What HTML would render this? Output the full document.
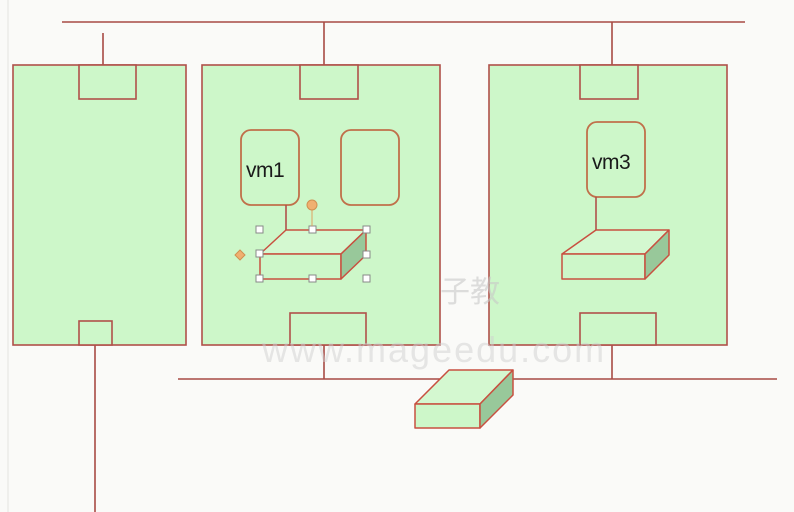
<!DOCTYPE html>
<html><head><meta charset="utf-8"><style>html,body{margin:0;padding:0;background:#fafaf8;width:794px;height:512px;overflow:hidden}</style></head>
<body>
<svg width="794" height="512" viewBox="0 0 794 512" xmlns="http://www.w3.org/2000/svg" font-family="Liberation Sans, sans-serif">
<rect width="794" height="512" fill="#fafaf8"/>
<line x1="8" y1="0" x2="8" y2="512" stroke="#e4e4e0" stroke-width="1"/>
<g stroke="#a84a44" stroke-width="1.6" fill="none">
<line x1="62" y1="22" x2="745" y2="22"/>
<line x1="103" y1="33" x2="103" y2="65"/>
<line x1="324" y1="22" x2="324" y2="65"/>
<line x1="612" y1="22" x2="612" y2="65"/>
<line x1="95" y1="345" x2="95" y2="512"/>
<line x1="178" y1="379" x2="777" y2="379"/>
<line x1="324" y1="345" x2="324" y2="379"/>
<line x1="612" y1="345" x2="612" y2="379"/>
</g>
<g stroke="#b0504a" stroke-width="1.6" fill="#cdf7c9">
<rect x="13" y="65" width="173" height="280"/>
<rect x="202" y="65" width="238" height="280"/>
<rect x="489" y="65" width="238" height="280"/>
<rect x="79" y="65" width="57" height="34"/>
<rect x="79" y="321" width="33" height="24"/>
<rect x="300" y="65" width="58" height="34"/>
<rect x="290" y="313" width="76" height="32"/>
<rect x="580" y="65" width="58" height="34"/>
<rect x="580" y="313" width="76" height="32"/>
</g>
<g stroke="#c0704a" stroke-width="1.8" fill="#cdf7c9">
<rect x="241" y="130" width="58" height="75" rx="10"/>
<rect x="341" y="130" width="58" height="75" rx="10"/>
<rect x="587" y="122" width="58" height="75" rx="10"/>
</g>
<g stroke="#b0504a" stroke-width="1.6">
<line x1="286" y1="205" x2="286" y2="230"/>
<line x1="596" y1="197" x2="596" y2="230"/>
</g>
<text x="246" y="177" font-size="21" fill="#1a1a1a" letter-spacing="-0.5">vm1</text>
<text x="592" y="169" font-size="21" fill="#1a1a1a" letter-spacing="-0.5">vm3</text>
<g stroke="#c85040" stroke-width="1.5" stroke-linejoin="round">
<polygon points="286,230 366,230 341,254 260,254" fill="#d4f8d0"/>
<rect x="260" y="254" width="81" height="25" fill="#cdf7c9"/>
<polygon points="341,254 366,230 366,255 341,279" fill="#98c89a"/>
<polygon points="596,230 669,230 645,254 562,254" fill="#d4f8d0"/>
<rect x="562" y="254" width="83" height="25" fill="#cdf7c9"/>
<polygon points="645,254 669,230 669,255 645,279" fill="#98c89a"/>
<polygon points="449,370 513,370 480,404 415,404" fill="#d4f8d0"/>
<rect x="415" y="404" width="65" height="24" fill="#cdf7c9"/>
<polygon points="480,404 513,370 513,395 480,428" fill="#98c89a"/>
</g>
<g fill="#fff" stroke="#888" stroke-width="1">
<rect x="256" y="226" width="7" height="7"/><rect x="309" y="226" width="7" height="7"/><rect x="363" y="226" width="7" height="7"/>
<rect x="256" y="250" width="7" height="7"/><rect x="363" y="251" width="7" height="7"/>
<rect x="256" y="275" width="7" height="7"/><rect x="309" y="275" width="7" height="7"/><rect x="363" y="275" width="7" height="7"/>
</g>
<line x1="312" y1="205" x2="312" y2="226" stroke="#e0a060" stroke-width="1"/>
<circle cx="312" cy="205" r="5" fill="#f0b070" stroke="#d09050"/>
<polygon points="240,250 245,255 240,260 235,255" fill="#f0b070" stroke="#d09050"/>
<text x="440" y="302" font-size="30" fill="#c8c8c8" fill-opacity="0.6" font-family="Noto Sans CJK SC, sans-serif">子教</text>
<text x="262" y="362" font-size="36" fill="#cfcfcf" fill-opacity="0.5" letter-spacing="2">www.mageedu.com</text>
</svg>
</body></html>
